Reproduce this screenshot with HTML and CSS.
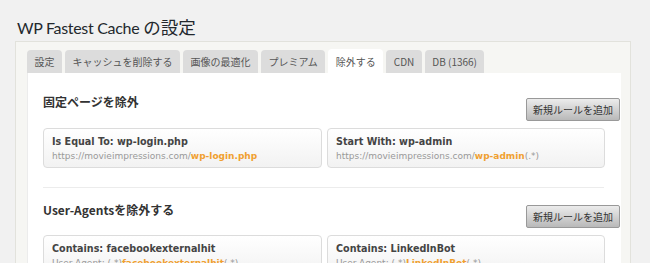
FILE: index.html
```html
<!DOCTYPE html>
<html lang="ja">
<head>
  <meta charset="UTF-8" />
  <meta name="viewport" content="width=device-width, initial-scale=1.0" />
  <title>WP Fastest Cache の設定</title>
  <link rel="stylesheet" href="styles.css">
</head>
<body>
  <div class="wrap">
    <h1>WP Fastest Cache <span class="jp">の設定</span></h1>

    <div class="box">
      <div class="tabs">
        <div class="tab">設定</div>
        <div class="tab">キャッシュを削除する</div>
        <div class="tab">画像の最適化</div>
        <div class="tab">プレミアム</div>
        <div class="tab active">除外する</div>
        <div class="tab">CDN</div>
        <div class="tab">DB (1366)</div>
      </div>

      <div class="panel">
        <!-- pages -->
        <div class="section">
          <div class="section-head">
            <h3>固定ページを除外</h3>
            <button class="add-btn">新規ルールを追加</button>
          </div>
          <div class="rules">
            <div class="rule">
              <div class="rule-title">Is Equal To: wp-login.php</div>
              <div class="rule-url">https://movieimpressions.com/<b>wp-login.php</b></div>
            </div>
            <div class="rule">
              <div class="rule-title">Start With: wp-admin</div>
              <div class="rule-url">https://movieimpressions.com/<b>wp-admin</b>(.*)</div>
            </div>
          </div>
        </div>

        <hr class="divider">

        <!-- user agents -->
        <div class="section second">
          <div class="section-head">
            <h3>User-Agentsを除外する</h3>
            <button class="add-btn">新規ルールを追加</button>
          </div>
          <div class="rules">
            <div class="rule">
              <div class="rule-title">Contains: facebookexternalhit</div>
              <div class="rule-url">User-Agent: (.*)<b>facebookexternalhit</b>(.*)</div>
            </div>
            <div class="rule">
              <div class="rule-title">Contains: LinkedInBot</div>
              <div class="rule-url">User-Agent: (.*)<b>LinkedInBot</b>(.*)</div>
            </div>
          </div>
        </div>
      </div>
    </div>
  </div>
</body>
</html>
```

FILE: styles.css
```css
body {
  margin: 0;
  background: #f1f1f1;
  font-family: "Noto Sans", "Noto Sans CJK JP", sans-serif;
  color: #23282d;
  overflow: hidden;
}
.wrap {
  padding: 14px 19px 0 15px;
}
h1 {
  height: 25px;
  margin: 0 0 2px 2px;
  font-family: Lato, "Noto Sans CJK JP", sans-serif;
  font-size: 16px;
  font-weight: 400;
  letter-spacing: -0.3px;
  line-height: 25px;
  color: #23282d;
}
h1 .jp {
  font-family: "Noto Sans CJK JP", sans-serif;
  font-size: 17.5px;
  letter-spacing: 0;
}
.box {
  background: #f6f6f3;
  border: 1px solid #e2e2dc;
  padding: 8px 9px 0 11px;
}
.tabs {
  display: flex;
  gap: 3px;
}
.tab {
  height: 23px;
  line-height: 23px;
  padding: 0 7.5px;
  background: #dcdcdc;
  border-radius: 4px 4px 0 0;
  font-family: "Noto Sans CJK JP", sans-serif;
  font-size: 10px;
  color: #555;
}
.tab.active {
  background: #fff;
  height: 24px;
  margin-top: -1px;
  line-height: 25px;
}
.panel {
  background: #fff;
  border-left: 1px solid #ececec;
  padding: 21px 1px 40px 15px;
}
.section-head {
  display: flex;
  justify-content: space-between;
  align-items: flex-start;
}
h3 {
  margin: 0;
  font-family: "Noto Sans CJK JP", sans-serif;
  font-size: 12px;
  font-weight: 700;
  line-height: 16px;
  color: #333;
}
.add-btn {
  margin-top: 4px;
  height: 23px;
  padding: 0 6px;
  font-family: "Noto Sans CJK JP", sans-serif;
  font-size: 10px;
  color: #333;
  background: linear-gradient(#ececec, #b9b9b9);
  border: 1px solid #999;
  border-radius: 2px;
}
.rules {
  display: grid;
  grid-template-columns: 279px 278px;
  gap: 5px;
  margin-top: 7px;
}
.rule {
  height: 40px;
  box-sizing: border-box;
  padding: 5px 8px;
  border: 1px solid #dcdcdc;
  border-radius: 4px;
  background: linear-gradient(#fff, #f2f2f2);
  font-family: "DejaVu Sans", sans-serif;
  white-space: nowrap;
  overflow: hidden;
}
.rule-title {
  font-size: 9.6px;
  font-weight: 700;
  line-height: 15px;
  color: #444;
}
.rule-url {
  font-size: 9px;
  line-height: 14px;
  color: #999;
}
.rule-url b {
  color: #f0a030;
}
.divider {
  border: 0;
  border-top: 1px solid #ececec;
  margin: 19px 16px 0 0;
}
.second {
  padding-top: 14px;
}
.second .add-btn {
  margin-top: 3px;
}
```
